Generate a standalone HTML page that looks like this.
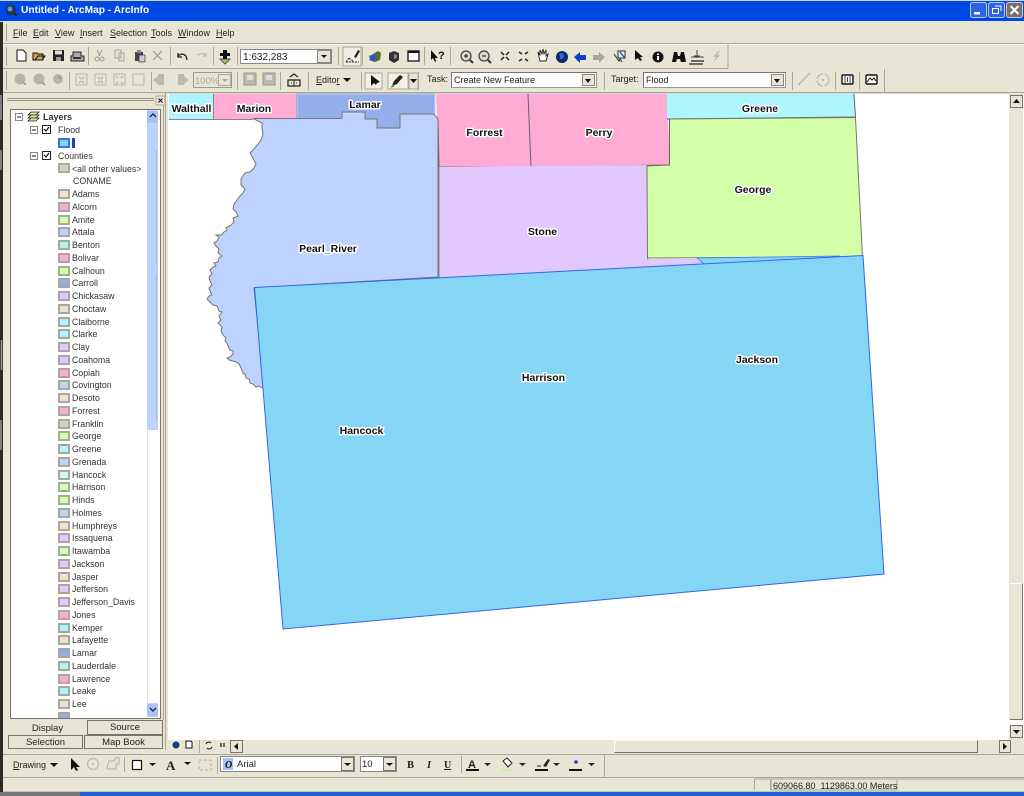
<!DOCTYPE html>
<html><head><meta charset="utf-8"><title>Untitled - ArcMap - ArcInfo</title>
<style>
html,body{margin:0;padding:0;background:#E9E5D4}
#r{position:relative;width:1024px;height:796px;overflow:hidden;background:#E9E5D4;font-family:"Liberation Sans",sans-serif;font-size:9.5px;color:#222;filter:blur(.3px)}
.a{position:absolute;white-space:nowrap}
.l{position:absolute;left:72px;white-space:nowrap;font-size:8.8px;line-height:12px;color:#333}
.s{position:absolute;left:58px;width:8px;height:6px;margin-top:-1px;border:2px solid #a9a69a}
svg{position:absolute;left:0;top:0}
u{text-decoration:underline}
.m{position:absolute;top:28px;font-size:9px;line-height:11px;color:#222}
.tab{position:absolute;height:14px;line-height:14px;text-align:center;font-size:9.5px;box-sizing:border-box;border:1px solid #77756a;background:#E9E5D4}
.w{position:absolute;background:#fff;border:1px solid #999;border-top-color:#777;border-left-color:#777;box-sizing:border-box;font-size:9px;color:#222}
.dd{position:absolute;top:1px;right:1px;bottom:1px;width:13px;background:#E9E5D4;border:1px solid #888;box-sizing:border-box}
.dd:after{content:"";position:absolute;left:2px;top:4px;border:3px solid transparent;border-top:4px solid #111;border-bottom:0}
</style></head><body><div id="r">

<div class="a" style="left:0;top:0;width:1024px;height:1px;background:#cfd6e8"></div>
<div class="a" style="left:0;top:1px;width:1024px;height:20px;background:#0048E6"></div>
<div class="a" style="left:0;top:21px;width:1024px;height:1px;background:#dfe6f7"></div>
<div class="a" style="left:21px;top:4px;color:#fff;font-size:10.2px;font-weight:bold;line-height:13px">Untitled - ArcMap - ArcInfo</div>

<div class="m" style="left:13px"><u>F</u>ile</div>
<div class="m" style="left:33px"><u>E</u>dit</div>
<div class="m" style="left:55px"><u>V</u>iew</div>
<div class="m" style="left:80px"><u>I</u>nsert</div>
<div class="m" style="left:110px"><u>S</u>election</div>
<div class="m" style="left:151px"><u>T</u>ools</div>
<div class="m" style="left:178px"><u>W</u>indow</div>
<div class="m" style="left:216px"><u>H</u>elp</div>

<!-- Table of contents -->
<div class="a" style="left:10px;top:109px;width:151px;height:610px;background:#fff;border:1px solid #77756a;box-sizing:border-box"></div>
<div class="a" style="left:147px;top:110px;width:11px;height:320px;background:#BED2FF"></div>
<div class="a" style="left:147px;top:430px;width:11px;height:274px;background:#fff;border-left:1px solid #e9e5d4;box-sizing:border-box"></div>
<div class="a" style="left:147px;top:703px;width:11px;height:14px;background:#BED2FF"></div>

<div class="l" style="left:43px;top:111px;font-weight:bold;font-size:9px">Layers</div>
<div class="l" style="left:58px;top:124px">Flood</div>
<div class="s" style="top:139px;background:#85D6F5;border-color:#3b74e8"></div>
<div class="a" style="left:72px;top:138px;width:3px;height:10px;background:#1a3fc0"></div>
<div class="l" style="left:58px;top:150px">Counties</div>
<div class="l" style="top:163px;left:72px">&lt;all other values&gt;</div><div class="s" style="top:164px;background:#d6d2c3"></div>
<div class="l" style="top:175px;left:73px">CONAME</div>
<div class="l" style="top:188px">Adams</div><div class="s" style="top:190px;background:#E8E4D3"></div>
<div class="l" style="top:201px">Alcorn</div><div class="s" style="top:203px;background:#FFABD4"></div>
<div class="l" style="top:214px">Amite</div><div class="s" style="top:216px;background:#D3FFA8"></div>
<div class="l" style="top:226px">Attala</div><div class="s" style="top:228px;background:#BED2FF"></div>
<div class="l" style="top:239px">Benton</div><div class="s" style="top:241px;background:#ADF5FF"></div>
<div class="l" style="top:252px">Bolivar</div><div class="s" style="top:254px;background:#FFABD4"></div>
<div class="l" style="top:265px">Calhoun</div><div class="s" style="top:267px;background:#D3FFA8"></div>
<div class="l" style="top:277px">Carroll</div><div class="s" style="top:279px;background:#94AEEB"></div>
<div class="l" style="top:290px">Chickasaw</div><div class="s" style="top:292px;background:#E1C8FF"></div>
<div class="l" style="top:303px">Choctaw</div><div class="s" style="top:305px;background:#E8E4D3"></div>
<div class="l" style="top:316px">Claiborne</div><div class="s" style="top:318px;background:#ADF5FF"></div>
<div class="l" style="top:328px">Clarke</div><div class="s" style="top:330px;background:#ADF5FF"></div>
<div class="l" style="top:341px">Clay</div><div class="s" style="top:343px;background:#E1C8FF"></div>
<div class="l" style="top:354px">Coahoma</div><div class="s" style="top:356px;background:#E1C8FF"></div>
<div class="l" style="top:367px">Copiah</div><div class="s" style="top:369px;background:#FFABD4"></div>
<div class="l" style="top:379px">Covington</div><div class="s" style="top:381px;background:#BED2FF"></div>
<div class="l" style="top:392px">Desoto</div><div class="s" style="top:394px;background:#E8E4D3"></div>
<div class="l" style="top:405px">Forrest</div><div class="s" style="top:407px;background:#FFABD4"></div>
<div class="l" style="top:418px">Franklin</div><div class="s" style="top:420px;background:#d6d2c3"></div>
<div class="l" style="top:430px">George</div><div class="s" style="top:432px;background:#D3FFA8"></div>
<div class="l" style="top:443px">Greene</div><div class="s" style="top:445px;background:#ADF5FF"></div>
<div class="l" style="top:456px">Grenada</div><div class="s" style="top:458px;background:#BED2FF"></div>
<div class="l" style="top:469px">Hancock</div><div class="s" style="top:471px;background:#C9FAFF"></div>
<div class="l" style="top:481px">Harrison</div><div class="s" style="top:483px;background:#D3FFA8"></div>
<div class="l" style="top:494px">Hinds</div><div class="s" style="top:496px;background:#D3FFA8"></div>
<div class="l" style="top:507px">Holmes</div><div class="s" style="top:509px;background:#BED2FF"></div>
<div class="l" style="top:520px">Humphreys</div><div class="s" style="top:522px;background:#E8E4D3"></div>
<div class="l" style="top:532px">Issaquena</div><div class="s" style="top:534px;background:#E1C8FF"></div>
<div class="l" style="top:545px">Itawamba</div><div class="s" style="top:547px;background:#D3FFA8"></div>
<div class="l" style="top:558px">Jackson</div><div class="s" style="top:560px;background:#E1C8FF"></div>
<div class="l" style="top:571px">Jasper</div><div class="s" style="top:573px;background:#E8E4D3"></div>
<div class="l" style="top:583px">Jefferson</div><div class="s" style="top:585px;background:#E1C8FF"></div>
<div class="l" style="top:596px">Jefferson_Davis</div><div class="s" style="top:598px;background:#E1C8FF"></div>
<div class="l" style="top:609px">Jones</div><div class="s" style="top:611px;background:#FFABD4"></div>
<div class="l" style="top:622px">Kemper</div><div class="s" style="top:624px;background:#ADF5FF"></div>
<div class="l" style="top:634px">Lafayette</div><div class="s" style="top:636px;background:#E8E4D3"></div>
<div class="l" style="top:647px">Lamar</div><div class="s" style="top:649px;background:#94AEEB"></div>
<div class="l" style="top:660px">Lauderdale</div><div class="s" style="top:662px;background:#ADF5FF"></div>
<div class="l" style="top:673px">Lawrence</div><div class="s" style="top:675px;background:#FFABD4"></div>
<div class="l" style="top:685px">Leake</div><div class="s" style="top:687px;background:#ADF5FF"></div>
<div class="l" style="top:698px">Lee</div><div class="s" style="top:700px;background:#E8E4D3"></div>
<div class="a" style="left:58px;top:712px;width:12px;height:6px;overflow:hidden;background:#94AEEB;border:2px solid #a9a69a;border-bottom:0;box-sizing:border-box"></div>

<!-- TOC tabs -->
<div class="tab" style="left:87px;top:720px;width:76px;height:15px">Source</div>
<div class="a" style="left:8px;top:720px;width:79px;height:15px;line-height:17px;text-align:center;font-size:9.5px;background:#E9E5D4">Display</div>
<div class="tab" style="left:8px;top:735px;width:75px">Selection</div>
<div class="tab" style="left:84px;top:735px;width:79px">Map Book</div>

<!-- Map view -->
<div class="a" style="left:168px;top:93px;width:841px;height:647px;background:#fff"></div>

<!-- Right scrollbar -->
<div class="a" style="left:1009px;top:94px;width:14px;height:631px;background:#E9E5D4"></div>
<div class="a" style="left:1010px;top:583px;width:13px;height:137px;background:#E9E5D4;border-top:1px solid #fff;border-right:1px solid #77756a;border-bottom:1px solid #77756a;box-sizing:border-box"></div>
<div class="a" style="left:1009px;top:720px;width:14px;height:5px;background:#fff"></div>
<div class="a" style="left:1023px;top:94px;width:1px;height:650px;background:#fff"></div>

<!-- Bottom map scrollbar strip -->
<div class="a" style="left:168px;top:740px;width:856px;height:14px;background:#E9E5D4"></div>
<div class="a" style="left:614px;top:740px;width:364px;height:13px;background:#E9E5D4;border-top:1px solid #fff;border-left:1px solid #fff;border-right:1px solid #77756a;border-bottom:1px solid #77756a;box-sizing:border-box"></div>

<svg width="1024" height="796" viewBox="0 0 1024 796">
<!-- MAP -->
<g stroke="#77756a" stroke-width="1">
<rect x="169" y="94" width="44.500" height="25" fill="#ADF5FF" stroke="none"/>
<rect x="214" y="94" width="82" height="25" fill="#FFABD4" stroke="none"/>
<path d="M213.500 94V119M296.500 94V119M169 119.500H253" fill="none" stroke="#8a887c"/>
<path d="M297 94H435V118H400V128H377V119H365V112H342V119H297Z" fill="#94AEEB" stroke="#c4d3f5"/>
<path d="M436 94H528L531 167H439Z" fill="#FFABD4" stroke="none"/>
<path d="M528 94H667L670 165L531 167Z" fill="#FFABD4" stroke="none"/>
<path d="M528 94L531 167M438 119L439 167H531L669.500 165L669.500 119" fill="none" stroke="#66645a"/>
<path d="M439 167L647 165L649 269L439 279Z" fill="#E1C8FF" stroke="none"/>
<path d="M439 167V278M647 165L648 260" fill="none" stroke="#8a887c"/>
<path d="M667 94H854L855 117L667 119Z" fill="#ADF5FF" stroke="none"/>
<path d="M854 94L855.500 117L667 119" fill="none" stroke="#66645a"/>
<path d="M670 119L855.500 117.500L862.500 257L647.500 258L647 166L670 165Z" fill="#D3FFA8" stroke="none"/>
<path d="M670 119L855.500 117.500L862.500 257L647.500 258L647 166L670 165" fill="none" stroke="#77756a"/>
<path d="M648 259L697 259L704 264L660 268L648 268Z" fill="#E1C8FF" stroke="none"/>
<path d="M697 258L840 256L800 262L704 264Z" fill="#85D6F5" stroke="#3b74e8" stroke-width=".8"/>

<!-- Pearl River -->
<path d="M253 118.500H342V112H365V119H377V128H400V114H434L438 119V277L254 288L264 389L259 386L256 387L253 384L250 383L249 379L246 378L245 374L243 373L241 368L239 364L236 362L233 361L229 360L227 358L230 357L233 354L233 351L230 350L228 346L227 343L225 341L226 338L223 335L221 331L222 327L218 323L221 320L219 316L222 312L219 311L217 306L213 305L210 302L207 299L209 296L212 295L210 291L209 288L212 285L210 281L209 277L212 274L210 270L213 267L216 266L214 263L218 262L219 258L222 256L218 253L219 249L216 246L214 243L217 241L219 237L216 235L221 235L224 232L227 230L226 228L231 225L234 222L233 218L238 216L236 212L233 209L234 204L237 200L240 196L243 193L245 189L241 185L241 179L245 173L250 172L254 168L256 164L254 160L250 153L253 150L258 144L261 140L263 134L262 128L262 123Z" fill="#BED2FF" stroke="#77756a" stroke-width="1"/>

<!-- Flood polygon -->
<path d="M254.500 287.500L863 255.500L884 574L283 629Z" fill="#85D6F5" stroke="#3366E8" stroke-width="1"/>
</g>
<g font-family="'Liberation Sans',sans-serif" font-weight="bold" font-size="10.500" text-anchor="middle" fill="#111" stroke="#fff" stroke-width="3" paint-order="stroke" stroke-linejoin="round">
<text x="191.500" y="112">Walthall</text><text x="254" y="112">Marion</text><text x="365" y="108">Lamar</text>
<text x="484.500" y="136">Forrest</text><text x="599" y="136">Perry</text><text x="760" y="112">Greene</text>
<text x="753" y="193">George</text><text x="542.500" y="235">Stone</text><text x="328" y="252">Pearl_River</text>
<text x="543.500" y="381">Harrison</text><text x="757" y="363">Jackson</text><text x="361.500" y="434">Hancock</text>
</g>

<!-- Chrome lines -->
<g fill="none">
<path d="M0 43.500H1024" stroke="#aaa79a"/><path d="M0 44.500H1024" stroke="#fff"/>
<path d="M0 68.500H728" stroke="#aaa79a"/>
<path d="M728 44V68" stroke="#aaa79a"/>
<path d="M0 92.500H1024" stroke="#aaa79a"/>
<path d="M884.500 69V92" stroke="#aaa79a"/>
<path d="M6.500 24V41M6.500 47V66M6.500 71V90" stroke="#aaa79a"/>
<path d="M88.500 47V65M170.500 47V65M213.500 47V65M237.500 47V65M338.500 47V65M362.500 47V65M424.500 47V65M450.500 47V65" stroke="#aaa79a"/>
<path d="M69.500 72V90M151.500 72V90M237.500 72V90M280.500 72V90M308.500 72V90M361.500 72V90M418.500 72V90M604.500 72V90M792.500 72V90M835.500 72V90M859.500 72V90" stroke="#aaa79a"/>
<path d="M0 754.500H1024" stroke="#aaa79a"/><path d="M0 777.500H1024" stroke="#aaa79a"/>
<path d="M0 791.500H1024" stroke="#c8c5b6"/>
<path d="M7 98.500H154M7 100.500H154" stroke="#9a978a"/>
<path d="M163.500 105V720M165.500 93V750M168 93H1009" stroke="#aaa79a"/>
</g>
<rect x="156" y="96" width="9" height="9" fill="#E9E5D4" stroke="#aaa79a"/>
<path d="M158.500 98.500l4 4m0-4l-4 4" stroke="#111" fill="none"/>

<!-- left dark edge + taskbar -->
<rect x="0" y="22" width="3" height="770" fill="#2b2b25"/>
<path d="M1 95V120M1 150V170M1.500 340V370M1 420V450" stroke="#999" stroke-width="1.500"/>
<rect x="0" y="792" width="80" height="4" fill="#777"/>
<rect x="80" y="792" width="944" height="4" fill="#1e62d8"/>

<!-- Title buttons -->
<rect x="970.500" y="2.500" width="16" height="15" rx="2" fill="#2a62e8" stroke="#b8cdf8"/><rect x="974" y="12" width="6" height="2.500" fill="#fff"/>
<rect x="988.500" y="2.500" width="16" height="15" rx="2" fill="#2a62e8" stroke="#b8cdf8"/><path d="M992.500 8.500h6v5h-6zM995 6h6v5" fill="none" stroke="#fff"/>
<rect x="1006.500" y="2.500" width="16" height="15" rx="2" fill="#7b6f69" stroke="#d8c8c8"/><path d="M1010.500 6l8 8m0-8l-8 8" stroke="#fff" stroke-width="2"/>

<!-- App icon -->
<circle cx="11" cy="10" r="5.500" fill="#1a3a66"/><circle cx="10" cy="9" r="2.500" fill="#6a96cc"/><path d="M14 13l3 3" stroke="#222" stroke-width="2"/>

<!-- Standard toolbar icons -->
<path d="M17 50h6l3 3v8h-9z" fill="#fff" stroke="#111"/>
<path d="M33 60V53h4l1 1h5v6zM35 60l3-4h7l-3 4z" fill="#c8a850" stroke="#111"/>
<rect x="53" y="50" width="11" height="11" fill="#222"/><rect x="55" y="50.500" width="7" height="4" fill="#ddd"/><rect x="56" y="57" width="5" height="4" fill="#999"/>
<path d="M73 52h8v4h3v5H71v-5h2z" fill="#aaa" stroke="#222"/><rect x="73" y="57" width="8" height="2" fill="#333"/>
<path d="M97 50l3 6m2-6l-3 6" stroke="#999"/><circle cx="97" cy="59" r="2" fill="none" stroke="#999"/><circle cx="102" cy="59" r="2" fill="none" stroke="#999"/>
<path d="M115 50h6v8h-6zM119 53h5v8h-5z" fill="#e9e5d4" stroke="#a8a598"/>
<path d="M135 52h8v9h-8z" fill="#444"/><rect x="137" y="50" width="4" height="3" fill="#888"/><rect x="139" y="55" width="6" height="7" fill="#ccd" stroke="#222" stroke-width=".6"/>
<path d="M153 51l9 9m0-9l-9 9" stroke="#999" stroke-width="1.200"/>
<path d="M178 57c1-3 5-4 8-1M178 53v4h4M186 56l1 4" fill="none" stroke="#222" stroke-width="1.300"/>
<path d="M206 56c-1-3-5-3-8-1M206 53v3h-3" fill="none" stroke="#bbb8aa" stroke-width="1.300"/>
<path d="M220 59h10l-5 5z" fill="#a8c858" stroke="#555"/><path d="M223 50h4v3h3v3h-3v3h-4v-3h-3v-3h3z" fill="#111"/>

<rect x="343" y="47" width="18" height="19" fill="#f0eee2" stroke="#aaa79a"/>
<path d="M346 62h13M349 58l-3 4M349 58l5 4" stroke="#222" fill="none" stroke-dasharray="2 1"/><path d="M354 57l4-7 2 1-4 7z" fill="#222"/>
<path d="M369 60l4-6 5-3 3 2-1 7-5 2z" fill="#5a6e2e"/><path d="M369 56l5-2 2 6-5 1z" fill="#2456c8"/>
<path d="M389 53l5-2 5 2v7l-5 3-5-3z" fill="#333"/><path d="M394 54l3 1v3l-3 1z" fill="#888"/>
<rect x="408" y="51" width="11" height="10" fill="#fff" stroke="#111" stroke-width="1.300"/><rect x="408" y="51" width="11" height="2" fill="#111"/>
<path d="M431 50v10l2-2 2 4 1-1-1-3h3z" fill="#111"/><text x="438" y="59" font-family="'Liberation Sans',sans-serif" font-weight="bold" font-size="11" fill="#111">?</text>

<circle cx="466" cy="56" r="5" fill="#dcdccc" stroke="#444" stroke-width="1.300"/><path d="M464 56h4M466 54v4" stroke="#111"/><path d="M470 60l3 3" stroke="#333" stroke-width="2"/>
<circle cx="484" cy="56" r="5" fill="#dcdccc" stroke="#444" stroke-width="1.300"/><path d="M482 56h4" stroke="#111"/><path d="M488 60l3 3" stroke="#333" stroke-width="2"/>
<path d="M501 52l3 3M509 52l-3 3M501 60l3-3M509 60l-3-3" stroke="#222" stroke-width="1.500"/>
<path d="M519 52l3 2M528 52l-3 2M519 61l3-2M528 61l-3-2" stroke="#222" stroke-width="1.500"/>
<path d="M539 57l-1-5 2 3 0-5 2 4 1-5 1 5 2-4 0 6 2-2-2 7h-6z" fill="#fff" stroke="#222" stroke-width=".9"/>
<circle cx="562" cy="57" r="6" fill="#112a66"/><path d="M559 54l4-1 1 4-3 3z" fill="#2e6fe0"/>
<path d="M574 57l6-5v3h6v5h-6v3z" fill="#1140c8"/>
<path d="M605 57l-6-5v3h-6v5h6v3z" fill="#aaa79a"/>
<rect x="618" y="51" width="7" height="7" fill="#fff" stroke="#222"/><path d="M614 54l5 7 1-2 2 3" fill="#fff" stroke="#222"/><path d="M620 52l4 5" stroke="#2456c8" stroke-width="1.500"/>
<path d="M635 50v10l3-2 2 3 2-1-2-3h3z" fill="#111"/>
<circle cx="658" cy="57" r="5.500" fill="#111"/><rect x="657" y="56" width="2" height="4" fill="#fff"/><rect x="657" y="53.500" width="2" height="1.500" fill="#fff"/>
<path d="M672 62l2-10h3l1 4h2l1-4h3l2 10h-5l-1-3h-3l-1 3z" fill="#111"/>
<path d="M691 61h13M689 64h14" stroke="#222" stroke-width="1.300"/><path d="M697 50v8M694 56h6" stroke="#444"/><path d="M691 57h12v1" fill="none" stroke="#444"/>
<path d="M718 51l-5 6h3l-3 6 7-8h-3l3-4z" fill="#bdbaac"/>

<!-- Scale box -->
<rect x="240.500" y="49.500" width="91" height="14" fill="#fff" stroke="#888"/>
<rect x="317.500" y="50.500" width="13" height="12" fill="#E9E5D4" stroke="#888"/><path d="M321 55h6l-3 3z" fill="#111"/>
<text x="243" y="60" font-family="'Liberation Sans',sans-serif" font-size="10" fill="#222">1:632,283</text>

<!-- Second toolbar -->
<g fill="#b8b5a8"><circle cx="20" cy="79" r="5.500"/><circle cx="39" cy="79" r="5.500"/><circle cx="58" cy="79" r="5"/></g>
<path d="M23 82l3 3M42 82l3 3M58 76l3 3" stroke="#9a978a" stroke-width="1.500" fill="none"/>
<g fill="none" stroke="#bbb8aa"><rect x="76" y="74" width="11" height="11"/><rect x="95" y="74" width="11" height="11"/><rect x="114" y="74" width="11" height="11"/><rect x="133" y="74" width="11" height="11"/></g>
<path d="M79 77l2 2M84 77l-2 2M79 83l2-2M84 83l-2-2M98 77l2 2M103 77l-2 2M98 83l2-2M103 83l-2-2M116 76l2 2M123 76l-2 2M116 84l2-2M123 84l-2-2" stroke="#a8a598"/>
<path d="M158 74h6v11h-6zM153 80l5-4v8z" fill="#bdbaac"/><path d="M178 74h6v11h-6zM189 80l-5-4v8z" fill="#bdbaac"/>
<rect x="193.500" y="72.500" width="38" height="15" fill="#E9E5D4" stroke="#999"/>
<rect x="218.500" y="74.500" width="12" height="11" fill="#E9E5D4" stroke="#aaa"/><path d="M222 79h6l-3 3z" fill="#a8a598"/>
<text x="195" y="84" font-family="'Liberation Sans',sans-serif" font-size="9.500" fill="#a8a598">100%</text>
<rect x="244" y="73" width="12" height="12" fill="#bdbaac" stroke="#9a978a"/><rect x="247" y="75" width="6" height="5" fill="#ddd"/>
<rect x="263" y="73" width="12" height="12" fill="#bdbaac" stroke="#9a978a"/><rect x="266" y="75" width="6" height="5" fill="#ddd"/>
<path d="M288 80h12v6h-12zM290 77l4-3 4 3" fill="none" stroke="#222" stroke-width="1.200"/><path d="M294 80v6M291 83h1M296 83h1" stroke="#222"/>
<path d="M343 78h8l-4 4z" fill="#111"/>
<rect x="365" y="73" width="17" height="16" fill="#f3f1e6" stroke="#aaa79a"/>
<path d="M371 75v11l3-3 2 2 1-2 3-1z" fill="#111"/>
<rect x="388" y="73" width="20" height="16" fill="#f3f1e6" stroke="#aaa79a"/>
<path d="M392 86l2-5 6-6 3 2-6 7z" fill="#222"/><path d="M391 87l3-1" stroke="#6a9a2e" stroke-width="1.500"/>
<rect x="409" y="73" width="9" height="16" fill="#E9E5D4" stroke="#aaa79a"/><path d="M410 79h7l-3.500 4z" fill="#111"/>
<path d="M798 85l12-12M798 85l2-1M809 73l1 1" stroke="#b3b0a2"/>
<circle cx="823" cy="80" r="6" fill="none" stroke="#bdbaac" stroke-width="1.300" stroke-dasharray="8 2"/><circle cx="823" cy="80" r="1" fill="#aaa"/>
<rect x="842" y="75" width="11" height="9" rx="1" fill="#fff" stroke="#111" stroke-width="1.400"/><path d="M847.500 77v5M845 76v7M850 76v7" stroke="#111" stroke-width=".8"/>
<rect x="866" y="75" width="11" height="9" rx="1" fill="#fff" stroke="#111" stroke-width="1.400"/><path d="M867 82l3-4 2 2 2-2 2 3" fill="none" stroke="#111"/>

<!-- TOC tree -->
<g fill="#fff" stroke="#88867a">
<rect x="15.500" y="113.500" width="7" height="7"/><rect x="30.500" y="126.500" width="7" height="7"/><rect x="30.500" y="152.500" width="7" height="7"/></g>
<path d="M17 117h4M32 130h4M32 156h4" stroke="#111"/>
<g fill="#fff" stroke="#222"><rect x="42.500" y="125.500" width="8" height="8"/><rect x="42.500" y="151.500" width="8" height="8"/></g>
<path d="M44 129l2 2 3-4M44 155l2 2 3-4" stroke="#111" fill="none" stroke-width="1.200"/>
<path d="M28 115l3-3h8l-3 3zM28 118l3-3h8l-3 3zM28 121l3-3h8l-3 3z" fill="#cfe8a0" stroke="#222" stroke-width=".8"/>
<!-- TOC scroll -->
<rect x="147" y="111" width="11" height="12" rx="2" fill="#a9c2f5"/><path d="M150 117l3-3 3 3" stroke="#111" fill="none" stroke-width="1.200"/>
<rect x="147" y="704" width="11" height="12" rx="2" fill="#a9c2f5"/><path d="M150 708l3 3 3-3" stroke="#111" fill="none" stroke-width="1.200"/>
<path d="M156.500 150V265M156.500 275V420" stroke="#9db8f0"/>

<!-- Right scroll buttons -->
<rect x="1010.500" y="95.500" width="12" height="12" fill="#E9E5D4" stroke="#77756a"/><path d="M1013 103h7l-3.500-4z" fill="#111"/>
<rect x="1010.500" y="725.500" width="12" height="12" fill="#E9E5D4" stroke="#77756a"/><path d="M1013 730h7l-3.500 4z" fill="#111"/>
<rect x="999.500" y="740.500" width="11" height="12" fill="#E9E5D4" stroke="#77756a"/><path d="M1003 743v7l4-3.500z" fill="#111"/>
<!-- Map tabs -->
<circle cx="176" cy="745" r="3.500" fill="#163a86"/><path d="M186 741h5l1 1v6h-6z" fill="#fff" stroke="#111"/>
<path d="M199.500 740V753" stroke="#aaa79a"/>
<path d="M206 744a3 3 0 0 1 5-1M212 747a3 3 0 0 1-5 1" fill="none" stroke="#111"/>
<path d="M221 743v4M224 743v4" stroke="#111" stroke-width="1.200"/>
<rect x="230.500" y="740.500" width="12" height="12" fill="#E9E5D4" stroke="#77756a"/><path d="M238 743v7l-4-3.500z" fill="#111"/>

<!-- Drawing toolbar -->
<path d="M50 763h8l-4 4z" fill="#111"/>
<path d="M71 758v12l3-3 2 4 2-1-2-3h4z" fill="#111"/>
<circle cx="93" cy="764" r="5.500" fill="none" stroke="#bdbaac" stroke-width="1.200"/><circle cx="93" cy="764" r="1" fill="#aaa"/>
<path d="M107 768l2-7h5l1-3h4v6h-3v5h-8z" fill="none" stroke="#b3b0a2"/>
<path d="M124.500 757V772" stroke="#aaa79a"/>
<rect x="132.500" y="760.500" width="9" height="9" fill="#fff" stroke="#111" stroke-width="1.200"/>
<path d="M149 763h7l-3.500 3z" fill="#111"/>
<text x="166" y="770" font-family="'Liberation Serif',serif" font-weight="bold" font-size="13" fill="#222">A</text>
<path d="M184 762h7l-3.500 3z" fill="#111"/>
<path d="M199 760h12v10h-12z" fill="none" stroke="#b3b0a2" stroke-dasharray="3 2"/>
<path d="M217.500 757V774" stroke="#aaa79a"/>
<rect x="220.500" y="756.500" width="134" height="15" fill="#fff" stroke="#888"/>
<rect x="223" y="758" width="10" height="12" fill="#a9c2f5"/><text x="225" y="768" font-family="'Liberation Serif',serif" font-style="italic" font-weight="bold" font-size="10" fill="#111">O</text>
<rect x="341.500" y="757.500" width="12" height="13" fill="#E9E5D4" stroke="#777"/><path d="M344 763h7l-3.500 3z" fill="#111"/>
<rect x="360.500" y="756.500" width="36" height="15" fill="#fff" stroke="#888"/>
<rect x="383.500" y="757.500" width="12" height="13" fill="#E9E5D4" stroke="#777"/><path d="M386 763h7l-3.500 3z" fill="#111"/>
<text x="407" y="768" font-family="'Liberation Serif',serif" font-weight="bold" font-size="10.500" fill="#222">B</text>
<text x="427" y="768" font-family="'Liberation Serif',serif" font-style="italic" font-weight="bold" font-size="10.500" fill="#222">I</text>
<text x="444" y="768" font-family="'Liberation Serif',serif" font-weight="bold" font-size="10" fill="#222" text-decoration="underline">U</text>
<path d="M461.500 756V773" stroke="#aaa79a"/>
<text x="468" y="768" font-family="'Liberation Sans',sans-serif" font-weight="bold" font-size="11" fill="#222">A</text><rect x="466" y="769" width="13" height="2" fill="#111"/>
<path d="M484 763h7l-3.500 3z" fill="#222"/>
<path d="M503 761l4-3 5 5-4 4z" fill="#fff" stroke="#222"/><rect x="501" y="769" width="13" height="1.500" fill="#c8f0a0"/>
<path d="M519 763h7l-3.500 3z" fill="#222"/>
<path d="M543 766l5-7 2 1-4 7z" fill="#222"/><path d="M537 766h4" stroke="#222"/><rect x="535" y="769" width="13" height="2" fill="#111"/>
<path d="M553 763h7l-3.500 3z" fill="#222"/>
<circle cx="576" cy="762" r="1.800" fill="#1140c8"/><rect x="569" y="769" width="13" height="2" fill="#111"/>
<path d="M588 763h7l-3.500 3z" fill="#222"/>
<path d="M604.500 755V777" stroke="#aaa79a"/>

<!-- Status bar -->
<path d="M754.500 790V779H1024" fill="none" stroke="#aaa79a"/>
<path d="M770.500 779V790" stroke="#aaa79a"/>
<rect x="771" y="779" width="126" height="11" fill="none" stroke="#aaa79a"/>
</svg>

<!-- Toolbar labels -->
<div class="a" style="left:316px;top:75px;font-size:9px;line-height:11px"><u>E</u>dito<u>r</u></div>
<div class="a" style="left:427px;top:74px;font-size:9px;line-height:11px">Task:</div>
<div class="w" style="left:451px;top:72px;width:146px;height:16px;line-height:14px;padding-left:2px">Create New Feature<div class="dd"></div></div>
<div class="a" style="left:611px;top:74px;font-size:9px;line-height:11px">Target:</div>
<div class="w" style="left:643px;top:72px;width:143px;height:16px;line-height:14px;padding-left:2px">Flood<div class="dd"></div></div>
<div class="a" style="left:13px;top:760px;font-size:9px;line-height:11px"><u>D</u>rawing</div>
<div class="a" style="left:237px;top:759px;font-size:9.500px;line-height:11px">Arial</div>
<div class="a" style="left:362px;top:759px;font-size:9.500px;line-height:11px">10</div>
<div class="a" style="left:773px;top:781px;font-size:9px;line-height:10px">609066.80&nbsp; 1129863.00 Meters</div>

</div></body></html>
